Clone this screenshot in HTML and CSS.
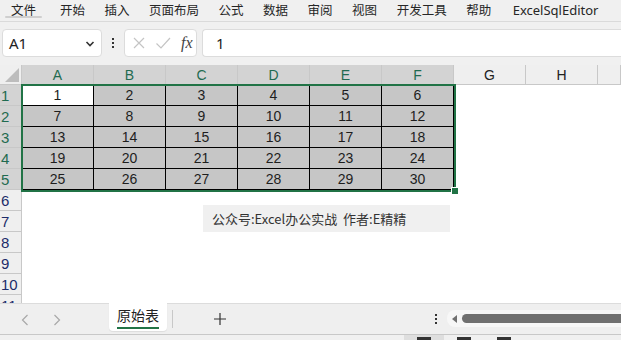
FILE: index.html
```html
<!DOCTYPE html>
<html lang="zh">
<head>
<meta charset="utf-8">
<link rel="stylesheet" href="styles.css">
</head>
<body>
<div class="app">
  <nav class="menu">
    <span class="mi first">文件</span>
    <span class="mi">开始</span>
    <span class="mi">插入</span>
    <span class="mi">页面布局</span>
    <span class="mi">公式</span>
    <span class="mi">数据</span>
    <span class="mi">审阅</span>
    <span class="mi">视图</span>
    <span class="mi">开发工具</span>
    <span class="mi">帮助</span>
    <span class="mi latin">ExcelSqlEditor</span>
  </nav>
  <div class="fbar">
    <div class="namebox"><span>A1</span>
      <svg class="chev" width="10" height="8" viewBox="0 0 10 8"><path d="M1.5 2 L5 5.5 L8.5 2" fill="none" stroke="#333" stroke-width="1.6"/></svg>
    </div>
    <div class="vdots"><i></i><i></i><i></i></div>
    <div class="btns">
      <svg width="14" height="14" viewBox="0 0 14 14"><path d="M2 2 L12 12 M12 2 L2 12" stroke="#c4c4c4" stroke-width="1.2" fill="none"/></svg>
      <svg width="16" height="14" viewBox="0 0 16 14"><path d="M1.5 7.5 L6 12 L15 2" stroke="#c4c4c4" stroke-width="1.2" fill="none"/></svg>
      <span class="fx">fx</span>
    </div>
    <div class="formula">1</div>
  </div>
  <div class="sheetwrap">
    <div class="sheet">
      <div class="corner"><svg width="14" height="14" viewBox="0 0 14 14"><path d="M14 0 L14 14 L0 14 Z" fill="#bdbdbd"/></svg></div>
      <div class="ch sel">A</div><div class="ch sel">B</div><div class="ch sel">C</div><div class="ch sel">D</div><div class="ch sel">E</div><div class="ch sel">F</div><div class="ch">G</div><div class="ch">H</div><div class="ch"></div>

      <div class="rh sel">1</div><div class="c d act">1</div><div class="c d">2</div><div class="c d">3</div><div class="c d">4</div><div class="c d">5</div><div class="c d">6</div><div class="c"></div><div class="c"></div><div class="c"></div>
      <div class="rh sel">2</div><div class="c d">7</div><div class="c d">8</div><div class="c d">9</div><div class="c d">10</div><div class="c d">11</div><div class="c d">12</div><div class="c"></div><div class="c"></div><div class="c"></div>
      <div class="rh sel">3</div><div class="c d">13</div><div class="c d">14</div><div class="c d">15</div><div class="c d">16</div><div class="c d">17</div><div class="c d">18</div><div class="c"></div><div class="c"></div><div class="c"></div>
      <div class="rh sel">4</div><div class="c d">19</div><div class="c d">20</div><div class="c d">21</div><div class="c d">22</div><div class="c d">23</div><div class="c d">24</div><div class="c"></div><div class="c"></div><div class="c"></div>
      <div class="rh sel">5</div><div class="c d">25</div><div class="c d">26</div><div class="c d">27</div><div class="c d">28</div><div class="c d">29</div><div class="c d">30</div><div class="c"></div><div class="c"></div><div class="c"></div>
      <div class="rh">6</div><div class="c"></div><div class="c"></div><div class="c"></div><div class="c"></div><div class="c"></div><div class="c"></div><div class="c"></div><div class="c"></div><div class="c"></div>
      <div class="rh">7</div><div class="c"></div><div class="c"></div><div class="c"></div><div class="c"></div><div class="c"></div><div class="c"></div><div class="c"></div><div class="c"></div><div class="c"></div>
      <div class="rh">8</div><div class="c"></div><div class="c"></div><div class="c"></div><div class="c"></div><div class="c"></div><div class="c"></div><div class="c"></div><div class="c"></div><div class="c"></div>
      <div class="rh">9</div><div class="c"></div><div class="c"></div><div class="c"></div><div class="c"></div><div class="c"></div><div class="c"></div><div class="c"></div><div class="c"></div><div class="c"></div>
      <div class="rh">10</div><div class="c"></div><div class="c"></div><div class="c"></div><div class="c"></div><div class="c"></div><div class="c"></div><div class="c"></div><div class="c"></div><div class="c"></div>
      <div class="rh">11</div><div class="c"></div><div class="c"></div><div class="c"></div><div class="c"></div><div class="c"></div><div class="c"></div><div class="c"></div><div class="c"></div><div class="c"></div>
    </div>
    <div class="selection"><span class="handle"></span></div>
    <div class="textbox">公众号:Excel办公实战&nbsp; 作者:E精精</div>
  </div>
  <div class="tabbar">
    <span class="nav">
      <svg width="8" height="12" viewBox="0 0 8 12"><path d="M6.5 1 L1.5 6 L6.5 11" fill="none" stroke="#a8a8a8" stroke-width="1.2"/></svg>
    </span>
    <span class="nav">
      <svg width="8" height="12" viewBox="0 0 8 12"><path d="M1.5 1 L6.5 6 L1.5 11" fill="none" stroke="#a8a8a8" stroke-width="1.2"/></svg>
    </span>
    <div class="tab"><span class="tabtext">原始表</span></div>
    <span class="tsep"></span>
    <span class="plus">
      <svg width="12" height="12" viewBox="0 0 12 12"><path d="M6 0 V12 M0 6 H12" stroke="#333" stroke-width="1.2"/></svg>
    </span>
    <span class="spacer"></span>
    <div class="vdots small"><i></i><i></i><i></i></div>
    <div class="scroll">
      <svg width="6" height="8" viewBox="0 0 6 8"><path d="M5 0 L5 8 L0 4 Z" fill="#707070"/></svg>
      <span class="thumb"></span>
    </div>
  </div>
  <div class="status">
    <span class="sv on"><i></i></span>
    <span class="sv"><i></i></span>
    <span class="sv"><i></i></span>
  </div>
</div>
</body>
</html>
```

FILE: styles.css
```css
* { box-sizing: border-box; }
html, body { margin: 0; padding: 0; }
body {
  width: 621px;
  height: 340px;
  overflow: hidden;
  background: #f0f0f0;
  font-family: "Noto Sans CJK SC", "Noto Sans", sans-serif;
  color: #333;
}
.app { width: 621px; height: 340px; display: flex; flex-direction: column; }

.menu {
  height: 22px;
  display: flex;
  align-items: flex-start;
  gap: 19.5px;
  padding: 0 0 0 11px;
  font-size: 12.5px;
  line-height: 12px;
  padding-top: 4px;
  background: #f0f0f0;
  border-bottom: 1px solid #dadada;
  box-shadow: 0 1px 1px rgba(0,0,0,0.04);
  white-space: nowrap;
}
.mi { position: relative; color: #262626; }
.mi.first { margin-right: 4.5px; }
.mi.first::after {
  content: "";
  position: absolute;
  left: -6px; right: -6px; top: 12px;
  height: 2px;
  background: #cfcfcf;
  border-radius: 1px;
}
.mi.latin { font-family: "Noto Sans", sans-serif; font-size: 13px; margin-left: 2px; }

.fbar {
  height: 43px;
  display: flex;
  align-items: flex-start;
  padding: 7px 0 0 2px;
  background: #f0f0f0;
}
.namebox {
  width: 100px;
  height: 28px;
  background: #fff;
  border: 1px solid #dcdcdc;
  border-radius: 4px;
  display: flex;
  align-items: center;
  justify-content: space-between;
  padding: 0 6px 0 6px;
  font-family: "Noto Sans", sans-serif;
  font-size: 15px;
  color: #222;
}
.chev { margin-top: 1px; }
.vdots {
  width: 22px;
  height: 28px;
  display: flex;
  flex-direction: column;
  align-items: center;
  justify-content: center;
  gap: 2px;
}
.vdots i { width: 2px; height: 2px; background: #333; display: block; }
.btns {
  width: 73px;
  height: 28px;
  background: #fff;
  border: 1px solid #dcdcdc;
  border-radius: 4px;
  display: flex;
  align-items: center;
  gap: 9px;
  padding-left: 7px;
}
.fx {
  font-family: "Liberation Serif", serif;
  font-style: italic;
  font-size: 16px;
  color: #444;
  margin-left: 1px;
}
.formula {
  flex: 1;
  margin-left: 5px;
  height: 28px;
  background: #fff;
  border: 1px solid #dcdcdc;
  border-right: none;
  border-radius: 4px 0 0 4px;
  padding-left: 13px;
  font-family: "Noto Sans", sans-serif;
  font-size: 15px;
  line-height: 26px;
  color: #222;
}

.sheetwrap {
  position: relative;
  height: 238px;
  overflow: hidden;
  background: #fff;
}
.sheet {
  display: grid;
  grid-template-columns: 22px repeat(8, 72px) 23px;
  grid-template-rows: 20px repeat(11, 21px);
  font-family: "Liberation Sans", Arial, sans-serif;
  font-size: 14px;
}
.corner {
  background: #efefef;
  border-right: 1px solid #c8c8c8;
  border-bottom: 1px solid #c8c8c8;
  display: flex;
  align-items: flex-end;
  justify-content: flex-end;
  padding: 0 2px 2px 0;
}
.ch {
  background: #efefef;
  border-right: 1px solid #c8c8c8;
  border-bottom: 1px solid #c8c8c8;
  text-align: center;
  line-height: 20px;
  color: #222;
}
.ch.sel { background: #d3d3d3; color: #1f6b50; }
.rh {
  background: #efefef;
  border-right: 1px solid #c8c8c8;
  border-bottom: 1px solid #c8c8c8;
  text-align: left;
  padding-left: 1px;
  line-height: 21px;
  color: #1c2c6a;
  font-size: 15px;
}
.rh.sel { background: #d3d3d3; color: #1f6b50; }
.c { background: #fff; }
.c.d {
  background: #c6c6c6;
  border-right: 1px solid #000;
  border-bottom: 1px solid #000;
  text-align: center;
  line-height: 21px;
  color: #1e1e1e;
}
.c.act { background: #fff; }

.selection {
  position: absolute;
  left: 21px;
  top: 19px;
  width: 435px;
  height: 108px;
  border: 2px solid #217346;
  pointer-events: none;
}
.handle {
  position: absolute;
  right: -5px;
  bottom: -5px;
  width: 6px;
  height: 6px;
  background: #217346;
  border: 1px solid #fff;
  box-sizing: content-box;
}
.textbox {
  position: absolute;
  left: 203px;
  top: 140px;
  width: 247px;
  height: 27px;
  background: #f0f0f0;
  padding-left: 9px;
  font-size: 13px;
  line-height: 27px;
  color: #333;
  white-space: nowrap;
}

.tabbar {
  height: 32px;
  display: flex;
  align-items: flex-start;
  background: #efefef;
  border-top: 1px solid #dcdcdc;
  border-bottom: 1px solid #c8c8c8;
}
.nav {
  width: 32px;
  height: 31px;
  display: flex;
  align-items: center;
  justify-content: center;
}
.nav:first-child { margin-left: 9px; }
.tab {
  margin-left: 36px;
  width: 58px;
  height: 28px;
  margin-top: -1px;
  background: #fff;
  border-radius: 0 0 4px 4px;
  box-shadow: 0 1px 1px rgba(0,0,0,0.08);
  display: flex;
  justify-content: center;
}
.tabtext {
  font-size: 14px;
  line-height: 24px;
  height: 26px;
  color: #222;
  border-bottom: 2px solid #217346;
}
.tsep { width: 1px; height: 18px; background: #c8c8c8; margin: 6px 0 0 5px; }
.plus { margin: 9px 0 0 41px; display: flex; }
.spacer { flex: 1; }
.vdots.small { width: 14px; height: 30px; gap: 2px; }
.scroll {
  width: 174px;
  height: 17px;
  margin: 6px 0 0 4px;
  background: #f7f7f7;
  border-radius: 8px 0 0 8px;
  display: flex;
  align-items: center;
  padding-left: 5px;
  gap: 4px;
}
.thumb {
  flex: 1;
  height: 9px;
  background: #707070;
  border-radius: 5px 0 0 5px;
}
.status {
  height: 5px;
  display: flex;
  padding-left: 404px;
  background: #f0f0f0;
}
.sv {
  width: 40px;
  height: 5px;
  display: flex;
  justify-content: center;
  align-items: flex-end;
}
.sv.on { background: #dedede; }
.sv i { display: block; width: 14px; height: 3px; background: #333; margin-top: 2px; align-self: flex-end; }
```
